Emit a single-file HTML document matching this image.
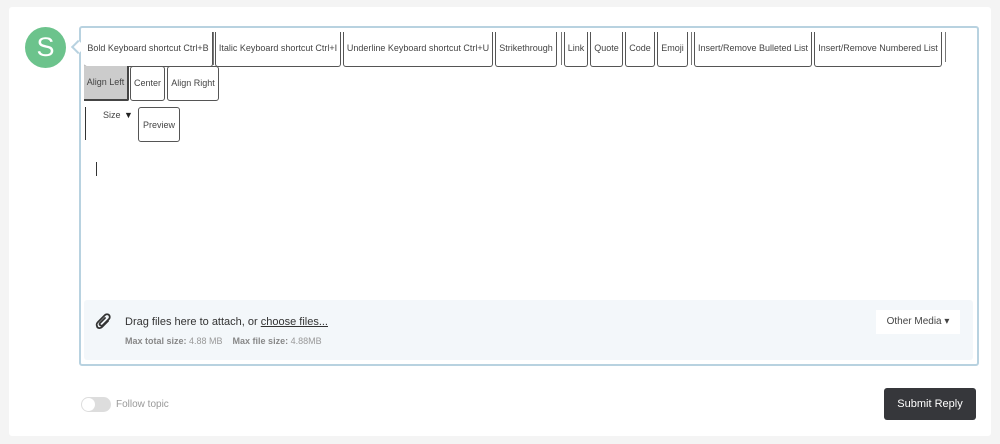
<!DOCTYPE html>
<html><head><style>
body{margin:0;width:1000px;height:444px;background:#f4f4f4;font-family:"Liberation Sans",sans-serif;position:relative;overflow:hidden}
.card{position:absolute;left:9px;top:7px;width:982px;height:429px;background:#fff;border-radius:3px}
.av{position:absolute;left:25px;top:27px;width:41px;height:41px;border-radius:50%;background:#6cc38c;color:#fff;font-size:27px;text-align:center;line-height:41px}
.ed{position:absolute;left:79px;top:26px;width:896px;height:336px;border:2px solid #b8d2e0;border-radius:3px;background:#fff}
.b{position:absolute;border:1px solid #555;border-top:none;border-radius:0 0 3px 3px;font-size:9px;color:#444;text-align:center;box-sizing:border-box;height:35px;line-height:32px;white-space:nowrap}
.s{position:absolute;width:1px;background:#777}
.att{position:absolute;left:84px;top:300px;width:889px;height:60px;background:#f3f7fa;border-radius:3px}
.t1{position:absolute;left:125px;top:316px;font-size:11px;color:#333}
.t2{position:absolute;left:125px;top:336px;font-size:9px;color:#999}
.t2 b{color:#888;font-weight:bold}
.om{position:absolute;left:876px;top:310px;width:84px;height:24px;background:#fff;font-size:10px;color:#444;text-align:center;line-height:24px}
.sub{position:absolute;left:884px;top:388px;width:92px;height:32px;background:#36373b;border-radius:3px;color:#fff;font-size:11px;text-align:center;line-height:32px}
.tg{position:absolute;left:81px;top:397px;width:30px;height:15px;border-radius:8px;background:#ddd}
.tg:after{content:"";position:absolute;left:1px;top:1px;width:13px;height:13px;border-radius:50%;background:#fff}
</style></head><body>
<div class="card"></div>
<div class="av">S</div>
<div style="position:absolute;left:73px;top:42px;width:8px;height:8px;background:#fff;border-left:2px solid #b8d2e0;border-bottom:2px solid #b8d2e0;transform:rotate(45deg);z-index:2"></div>
<div class="ed"></div>
<div class="b" style="left:84px;top:32px;width:129px;border-left:none">Bold Keyboard shortcut Ctrl+B</div>
<div class="s" style="left:213px;top:32px;height:33px"></div>
<div class="b" style="left:215px;top:32px;width:126px">Italic Keyboard shortcut Ctrl+I</div>
<div class="b" style="left:343px;top:32px;width:150px">Underline Keyboard shortcut Ctrl+U</div>
<div class="b" style="left:495px;top:32px;width:62px">Strikethrough</div>
<div class="s" style="left:561px;top:32px;height:33px"></div>
<div class="b" style="left:564px;top:32px;width:24px">Link</div>
<div class="b" style="left:590px;top:32px;width:33px">Quote</div>
<div class="b" style="left:625px;top:32px;width:30px">Code</div>
<div class="b" style="left:657px;top:32px;width:31px">Emoji</div>
<div class="s" style="left:691px;top:32px;height:33px"></div>
<div class="b" style="left:694px;top:32px;width:118px">Insert/Remove Bulleted List</div>
<div class="b" style="left:814px;top:32px;width:128px">Insert/Remove Numbered List</div>
<div class="s" style="left:945px;top:32px;height:30px"></div>
<div class="b" style="left:84px;top:66px;width:45px;border:none;border-right:2px solid #444;border-bottom:2px solid #444;background:#ccc;border-radius:0 0 2px 0">Align Left</div>
<div class="b" style="left:130px;top:66px;width:35px;border-top:1px solid #555;border-radius:3px">Center</div>
<div class="b" style="left:167px;top:66px;width:52px;border-top:1px solid #555;border-radius:3px">Align Right</div>
<div class="s" style="left:85px;top:107px;height:33px;background:#333"></div>
<div style="position:absolute;left:103px;top:110px;font-size:9px;color:#444">Size</div>
<div style="position:absolute;left:124px;top:110px;font-size:9px;color:#222">▼</div>
<div class="b" style="left:138px;top:107px;width:42px;border-top:1px solid #555;border-radius:3px;line-height:35px">Preview</div>
<div style="position:absolute;left:96px;top:162px;width:1px;height:14px;background:#333"></div>
<div class="att"></div>
<svg style="position:absolute;left:95px;top:312px" width="18" height="20" viewBox="0 0 18 20"><path d="M13 9 L7 15 C5 17 2 16 2 14 C1 12 2 11 3 10 L10 3 C11 2 13 2 14 3 C15 4 15 6 14 7 L8 13 C7 14 6 14 5 13 C4 12 5 11 5 11 L10 6" fill="none" stroke="#333" stroke-width="1.8" stroke-linecap="round"/></svg>
<div class="t1">Drag files here to attach, or <u>choose files...</u></div>
<div class="t2"><b>Max total size:</b> 4.88 MB &nbsp;&nbsp; <b>Max file size:</b> 4.88MB</div>
<div class="om">Other Media ▾</div>
<div class="tg"></div>
<div style="position:absolute;left:116px;top:399px;font-size:10px;color:#999">Follow topic</div>
<div class="sub">Submit Reply</div>
</body></html>
